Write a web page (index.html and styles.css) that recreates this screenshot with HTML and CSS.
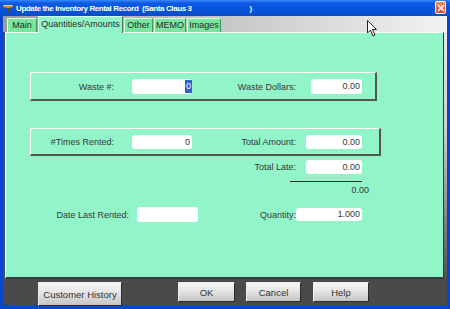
FILE: index.html
```html
<!DOCTYPE html>
<html lang="en">
<head>
    <meta charset="utf-8">
    <title>Update the Inventory Rental Record</title>
    <link rel="stylesheet" href="styles.css">
</head>
<body>
<div class="window">
    <div class="titlebar">
        <svg class="app-icon" width="10" height="9" viewBox="0 0 10 9">
            <path d="M0 1 L10 1 L10 3 L6 4 L6 8 L4 8 L4 4 L0 3 Z" fill="#c8903c"/>
            <path d="M1 1 L9 1 L9 2 L1 2 Z" fill="#f4d070"/>
            <path d="M4 4 L6 4 L6 8 L4 8 Z" fill="#7a4a18"/>
        </svg>
        <span class="title">Update the Inventory Rental Record&nbsp;&nbsp;(Santa Claus 3</span>
        <span class="title-end">)</span>
        <div class="close">
            <svg width="8" height="8" viewBox="0 0 8 8">
                <path d="M1 1 L7 7 M7 1 L1 7" stroke="#fff" stroke-width="1.6"/>
            </svg>
        </div>
    </div>
    <div class="frame">
        <div class="tabstrip">
            <div class="tab tab-main">Main</div>
            <div class="tab tab-on">Quantities/Amounts</div>
            <div class="tab tab-other">Other</div>
            <div class="tab tab-memo">MEMO</div>
            <div class="tab tab-images">Images</div>
        </div>
        <div class="middle">
            <div class="side-left"></div>
            <div class="panel">
                <div class="group group-1">
                    <div class="lbl lbl-a">Waste #:</div>
                    <div class="box box-a box-tall"><span class="sel">0</span></div>
                    <div class="lbl lbl-b">Waste Dollars:</div>
                    <div class="box box-b box-tall">0.00</div>
                </div>
                <div class="group group-2">
                    <div class="lbl lbl-a">#Times Rented:</div>
                    <div class="box box-a">0</div>
                    <div class="lbl lbl-b">Total Amount:</div>
                    <div class="box box-c">0.00</div>
                </div>
                <div class="row row-late">
                    <div class="lbl lbl-b">Total Late:</div>
                    <div class="box box-c">0.00</div>
                </div>
                <div class="sum-line"></div>
                <div class="sum">0.00</div>
                <div class="row row-last">
                    <div class="lbl lbl-date">Date Last Rented:</div>
                    <div class="box box-date"></div>
                    <div class="lbl lbl-qty">Quantity:</div>
                    <div class="box box-qty">1.000</div>
                </div>
            </div>
            <div class="side-right"></div>
        </div>
        <div class="buttonbar">
            <div class="btn btn-history">Customer History</div>
            <div class="btn btn-ok">OK</div>
            <div class="btn btn-cancel">Cancel</div>
            <div class="btn btn-help">Help</div>
        </div>
    </div>
    <svg class="cursor" width="12" height="18" viewBox="0 0 12 18">
        <path d="M0.5 0.5 L0.5 13 L3.5 10 L6 16 L8 15 L5.5 9.5 L9.5 9.5 Z" fill="#fff" stroke="#222" stroke-width="1"/>
    </svg>
</div>
</body>
</html>
```

FILE: styles.css
```css
body {
    margin: 0;
    font-family: 'Liberation Sans', Arial, sans-serif;
}
.window {
    position: relative;
    width: 450px;
    height: 309px;
    background: #0a46c8;
    display: flex;
    flex-direction: column;
    overflow: hidden;
}
.titlebar {
    height: 16px;
    display: flex;
    align-items: center;
    background: linear-gradient(#3c88f6 0, #0c5ae4 3px, #0853da 60%, #0a4cc8 100%);
    color: #fff;
    position: relative;
}
.app-icon {
    margin: 0 3px 0 3px;
}
.title {
    font-weight: bold;
    font-size: 8px;
    letter-spacing: -0.4px;
    white-space: nowrap;
}
.title-end {
    font-weight: bold;
    font-size: 8px;
    margin-left: 58px;
}
.close {
    position: absolute;
    left: 435px;
    top: 1px;
    width: 11px;
    height: 13px;
    background: linear-gradient(#f08a60, #d8461e);
    border: 1px solid #fff;
    border-radius: 2px;
    box-sizing: border-box;
    display: flex;
    align-items: center;
    justify-content: center;
}
.frame {
    flex: 1;
    margin: 0 3px 4px 3px;
    display: flex;
    flex-direction: column;
}
.tabstrip {
    height: 16px;
    display: flex;
    align-items: flex-end;
    padding-left: 4px;
    background: linear-gradient(to right, #9c9c9c, #f2f2f2);
}
.tab {
    height: 14px;
    box-sizing: border-box;
    font-size: 9px;
    line-height: 13px;
    text-align: center;
    color: #2a2a2a;
    background: #78e69c;
    border-top: 1px solid #d8ffe4;
    border-left: 1px solid #d8ffe4;
    border-right: 1px solid #3a9a5a;
    margin-right: 1px;
}
.tab-main {
    width: 30px;
}
.tab-on {
    width: 85px;
    height: 17px;
    margin-bottom: -1px;
    background: #92f4c9;
    line-height: 14px;
    border-right: 1px solid #4a7a60;
    position: relative;
    z-index: 1;
}
.tab-other {
    width: 29px;
}
.tab-memo {
    width: 32px;
}
.tab-images {
    width: 34px;
}
.middle {
    flex: 1;
    display: flex;
}
.side-left {
    width: 2px;
    background: #3c4a78;
}
.side-right {
    width: 3px;
    background: linear-gradient(#e8e8e8, #cfcfcf 40%, #505050);
}
.panel {
    flex: 1;
    background: #92f4c9;
    border-top: 1px solid #ffffff;
    border-left: 1px solid #ffffff;
    border-right: 1px solid #3a3a3a;
    border-bottom: 2px solid #3a3a3a;
    padding: 39px 0 0 24px;
    color: #383838;
    font-size: 9px;
}
.group {
    display: flex;
    align-items: center;
    box-sizing: border-box;
    border-top: 1px solid #ffffff;
    border-left: 1px solid #ffffff;
    border-right: 2px solid #555;
    border-bottom: 2px solid #555;
    padding-top: 1px;
}
.group-1 {
    width: 347px;
    height: 29px;
}
.group-2 {
    width: 351px;
    height: 28px;
    margin-top: 27px;
}
.lbl {
    text-align: right;
    white-space: nowrap;
}
.group .lbl-a {
    width: 83px;
    margin-right: 18px;
}
.lbl-b {
    width: 104px;
}
.group-1 .lbl-b {
    margin-right: 15px;
}
.group-2 .lbl-b,
.row-late .lbl-b {
    margin-right: 10px;
}
.box {
    height: 14px;
    background: #fff;
    border-radius: 3px;
    text-align: right;
    padding-right: 2px;
    box-sizing: border-box;
    line-height: 14px;
    font-size: 9px;
    color: #383838;
}
.box-tall {
    height: 15px;
    line-height: 15px;
}
.box-a {
    width: 60px;
}
.box-b {
    width: 51px;
}
.box-c {
    width: 56px;
}
.sel {
    display: inline-block;
    background: #3160c8;
    color: #fff;
    padding: 0 1px;
    margin-right: -2px;
    line-height: 13px;
}
.row {
    display: flex;
    align-items: center;
}
.row-late {
    margin: 4px 0 0 162px;
}
.sum-line {
    margin: 7px 0 0 260px;
    width: 72px;
    height: 1px;
    background: #333;
}
.sum {
    margin: 3px 0 0 260px;
    width: 79px;
    text-align: right;
    line-height: 11px;
}
.row-last {
    margin: 11px 0 0 -24px;
}
.lbl-date {
    width: 123px;
    margin-right: 8px;
}
.box-date {
    width: 61px;
    height: 15px;
}
.lbl-qty {
    width: 98px;
}
.box-qty {
    width: 66px;
    height: 13px;
    line-height: 13px;
}
.buttonbar {
    height: 26px;
    background: #4a4a4a;
    display: flex;
    align-items: flex-start;
    padding: 3px 0 0 35px;
    box-sizing: border-box;
}
.btn {
    height: 20px;
    box-sizing: border-box;
    background: linear-gradient(#f6f6f6, #e2e2e2 50%, #c4c4c4);
    border: 1px solid #2a2a2a;
    border-top-color: #ededed;
    border-left-color: #ededed;
    font-size: 9.5px;
    color: #333;
    display: flex;
    align-items: center;
    justify-content: center;
}
.btn-history {
    width: 84px;
    height: 24px;
    margin-right: 56px;
}
.btn-ok {
    width: 57px;
    margin-right: 11px;
}
.btn-cancel {
    width: 55px;
    margin-right: 12px;
}
.btn-help {
    width: 56px;
}
.cursor {
    position: absolute;
    left: 367px;
    top: 20px;
}
```
